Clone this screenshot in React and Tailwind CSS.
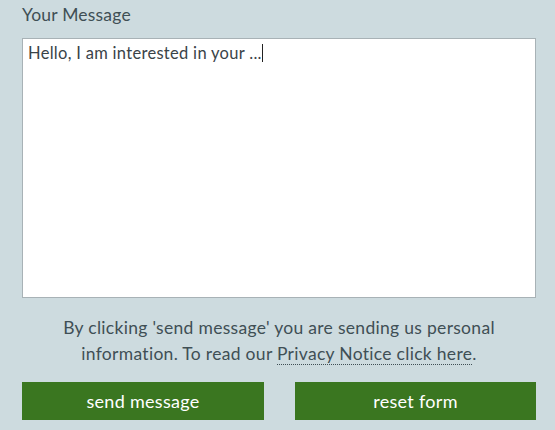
export default function App() {
  return (
    <div
      className="w-[555px] h-[430px] bg-[#cddbdf] pl-[22px] pr-[19px] pt-[4px] overflow-hidden"
      style={{ fontFamily: "Lato, 'Open Sans', sans-serif" }}
    >
      <label className="block text-[17.5px] tracking-[0.2px] leading-[22px] text-[#3f4f55]">Your Message</label>
      <div className="mt-[12px] h-[260px] w-full bg-white border border-[#a8b2b6] px-[5px] pt-[3px] text-[16.5px] tracking-[0.3px] leading-[22px] text-[#3a4348]">
        Hello, I am interested in your ...
        <span className="inline-block w-px h-[18px] bg-[#222] align-[-3px]" />
      </div>
      <p className="mt-[17px] text-center text-[17.5px] tracking-[0.3px] leading-[26px] text-[#3f4f55]">
        By clicking 'send message' you are sending us personal
        <br />
        information. To read our{" "}
        <a className="border-b border-dotted border-[#3f4f55]">Privacy Notice click here</a>.
      </p>
      <div className="mt-[15px] flex justify-between">
        <button className="w-[242px] h-[38px] bg-[#3a7620] text-white text-[18px] tracking-[0.3px]">send message</button>
        <button className="w-[241px] h-[38px] bg-[#3a7620] text-white text-[18px] tracking-[0.3px]">reset form</button>
      </div>
    </div>
  );
}
